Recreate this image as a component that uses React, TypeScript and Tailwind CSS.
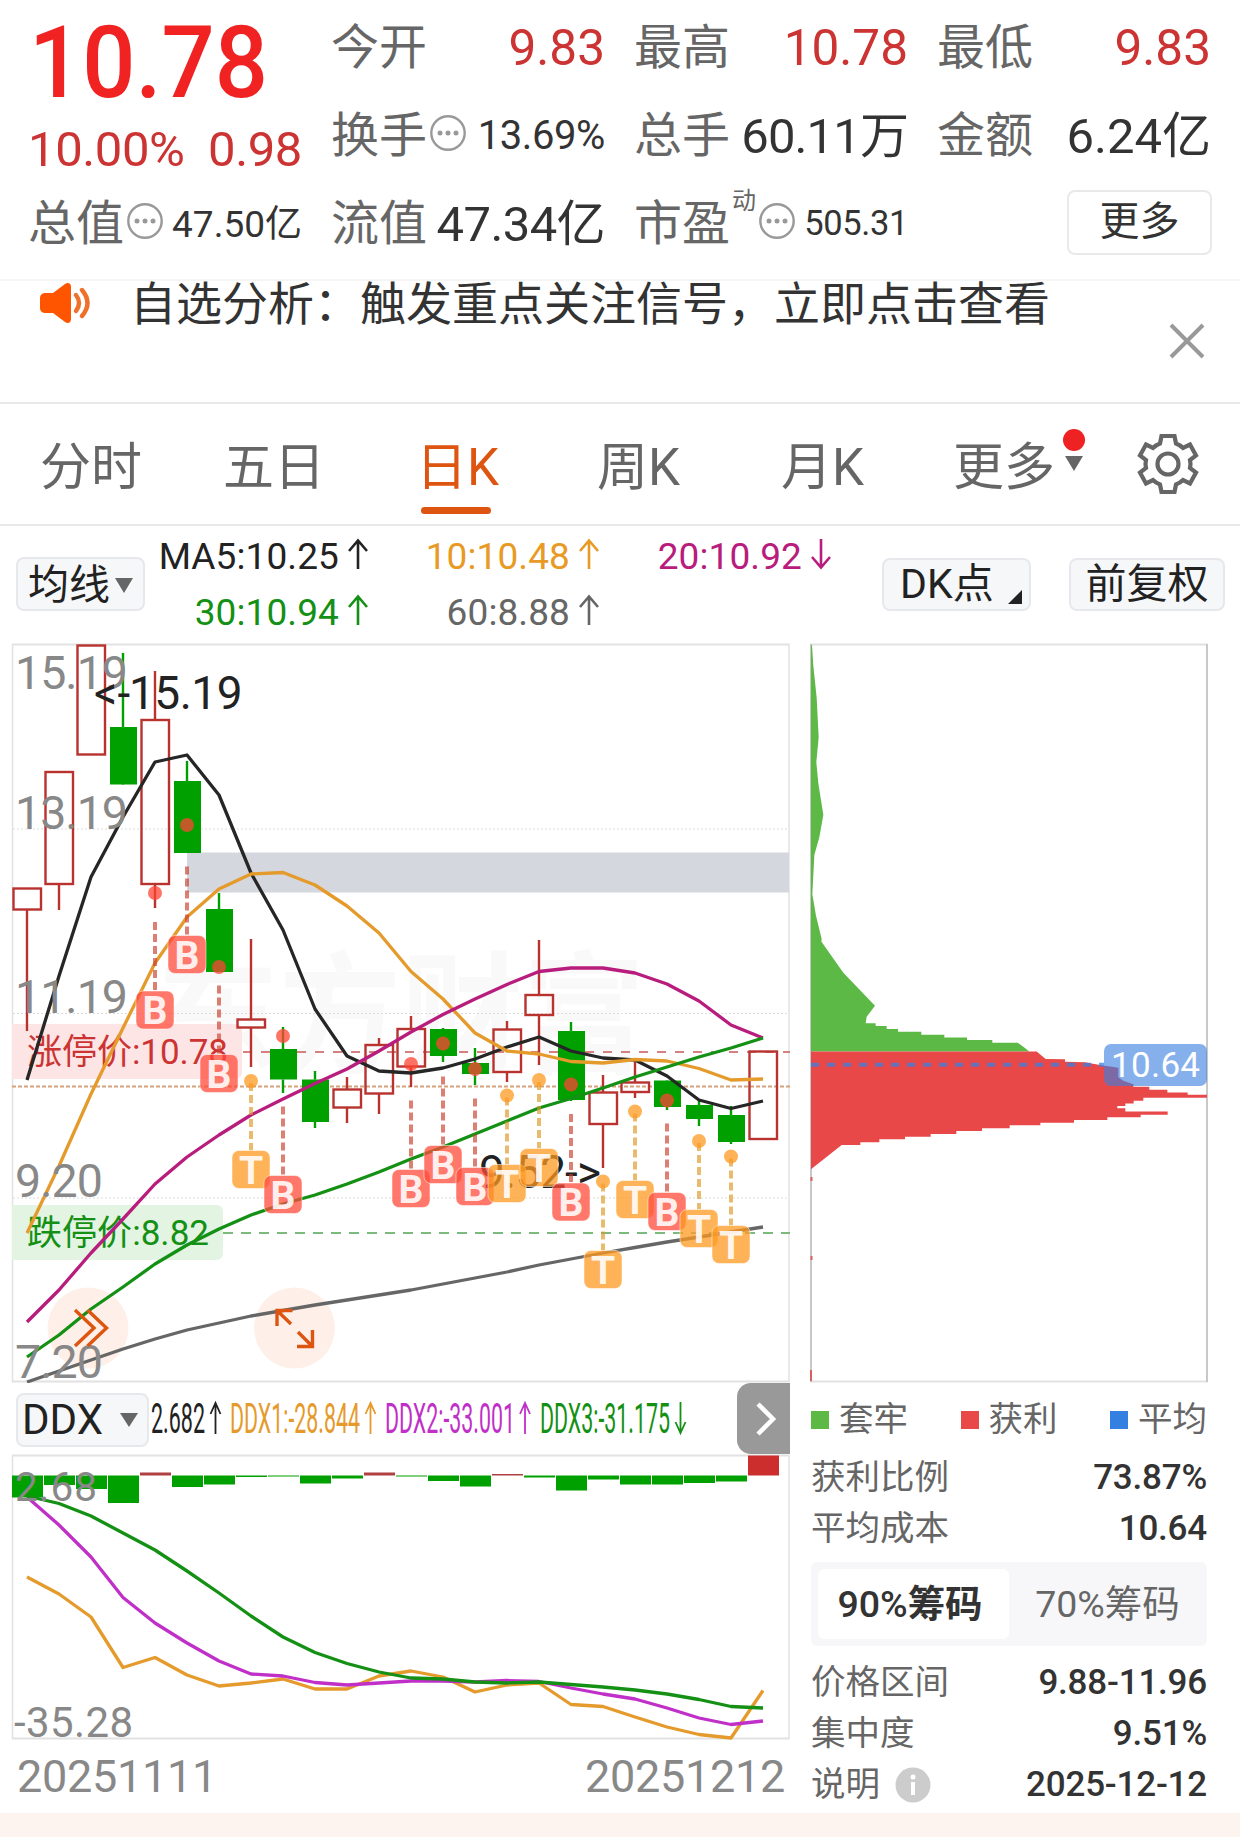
import type { ReactNode } from 'react'

const RED = '#b8332f'
const GREEN = '#00a000'

// x centre of the n-th trading day
const cx = (i: number) => 27 + i * 32

// [up, body top, body bottom, wick top, wick bottom]
type Candle = [boolean, number, number, number, number]

const CANDLES: Candle[] = [
  [true, 888.5, 909.5, 888, 1031],
  [true, 772, 884, 772, 910],
  [true, 645.5, 754.5, 645, 755],
  [false, 727, 784.5, 653, 785],
  [true, 720, 884, 671, 908],
  [false, 781, 853, 761, 853],
  [false, 909, 972, 893, 972],
  [true, 1019.5, 1027.5, 939, 1067],
  [false, 1049, 1079.5, 1027, 1093],
  [false, 1079.5, 1122, 1071, 1128],
  [true, 1089.5, 1107.5, 1077, 1123],
  [true, 1045, 1093.5, 1038, 1114],
  [true, 1029, 1066.5, 1016, 1087],
  [false, 1029, 1056, 1028, 1062],
  [false, 1063, 1074, 1048, 1085],
  [true, 1029.5, 1072, 1021, 1082],
  [true, 995, 1015, 940, 1065],
  [false, 1031, 1100, 1022, 1101],
  [true, 1092.5, 1124, 1075, 1168],
  [true, 1082.5, 1092, 1060, 1098],
  [false, 1080.5, 1107, 1080, 1110],
  [false, 1105, 1119, 1101, 1126],
  [false, 1115, 1142, 1106, 1144],
  [true, 1051.5, 1139, 1051, 1139],
]

const MA5 = [1080, 976, 877, 817, 762, 755, 795, 873, 930, 1009, 1056, 1071, 1073, 1068, 1059, 1047, 1037, 1051, 1058, 1060, 1076, 1100, 1108.5, 1101]
const MA10 = [1233, 1166, 1094, 1028, 963, 917, 889, 874, 872.5, 885, 906, 933, 971.5, 999, 1033, 1051, 1054, 1061.5, 1063, 1059.5, 1061, 1068.5, 1080, 1079]
const MA20 = [1322, 1290, 1253, 1219, 1184, 1157, 1135, 1115, 1099, 1083.5, 1069, 1051, 1032, 1014.5, 999, 984.5, 971.5, 968, 968, 973, 984, 1001, 1025, 1038]
const MA30 = [1357, 1335, 1309, 1287, 1264, 1245, 1229, 1215, 1204, 1195, 1184, 1172, 1159, 1147, 1134, 1121, 1108, 1098.5, 1088, 1077, 1067, 1057, 1048, 1038]
const MA60 = [1382, 1371, 1360, 1349, 1339, 1330, 1323, 1316, 1310.5, 1305, 1300, 1295, 1290, 1284, 1278, 1272, 1265, 1259, 1253, 1247.5, 1242, 1237, 1232, 1227]

// [day index, kind, dot y, badge centre y]
type Signal = [number, 'B' | 'T', number, number]

const SIGNALS: Signal[] = [
  [5, 'B', 825, 954.5],
  [4, 'B', 893, 1010],
  [6, 'B', 967, 1073.5],
  [7, 'T', 1081, 1169.5],
  [8, 'B', 1036, 1194.5],
  [12, 'B', 1064, 1188.5],
  [13, 'B', 1043.5, 1164.5],
  [14, 'B', 1069, 1186.5],
  [15, 'T', 1095.5, 1183.5],
  [16, 'T', 1080, 1167.5],
  [17, 'B', 1084.5, 1202],
  [18, 'T', 1181.5, 1269.5],
  [19, 'T', 1111.5, 1199.5],
  [20, 'B', 1100.5, 1211.5],
  [21, 'T', 1141, 1228.5],
  [22, 'T', 1156.5, 1244.5],
]

const DDX_BARS = [22, 9.5, 13.5, 27.5, -3, 11.5, 9, 1.5, 1, 8, 3, -3, 1, 5.5, 11, -1.5, 2, 15, 4, 9, 9, 7.5, 6, -20]
const DDX1 = [1577, 1594, 1617, 1667.5, 1657.5, 1675, 1686, 1683, 1679, 1689, 1689, 1676, 1671, 1677, 1692, 1685, 1683, 1704.5, 1706.5, 1717, 1727, 1734.5, 1738, 1690.5]
const DDX2 = [1497, 1525, 1557, 1597.5, 1623, 1643, 1661, 1674, 1676, 1682.5, 1685, 1683, 1681, 1681, 1682, 1680.5, 1681.5, 1688, 1694, 1699, 1708, 1718, 1724.5, 1721]
const DDX3 = [1496, 1503.5, 1516, 1533, 1550, 1571, 1593, 1616, 1637, 1652.5, 1663.5, 1672, 1678, 1679, 1682, 1683, 1682, 1684.5, 1687, 1690, 1694, 1699.5, 1706.5, 1708]

const TRAPPED =
  '63,43 66,43 70,100 80,190 86,300 79,370 85,430 100,517 88,580 73,630 67,740 78,800 95,865 94,872 160,960 255,1052 230,1083 227,1101 257,1101 257,1109 290,1109 290,1117 324,1117 324,1125 394,1125 394,1133 463,1133 463,1141 531,1141 531,1148 607,1148 607,1156 683,1156 700,1167 718,1180 63,1180'
const PROFIT =
  '63,1180 740,1180 767,1201 825,1202 825,1209 885,1210 930,1218 985,1226 985,1252 1000,1262 1030,1272 1030,1279 1078,1279 1078,1287 1132,1287 1132,1295 1193,1295 1193,1301 1251,1301 1251,1310 1060,1310 1060,1318 1031,1318 1031,1326 1006,1326 1006,1333 982,1333 982,1339 1006,1339 1006,1348 1133,1348 1133,1357 1052,1357 1052,1364 952,1364 952,1372 852,1372 852,1380 751,1380 751,1387 659,1387 659,1395 576,1395 576,1403 499,1403 499,1411 422,1411 422,1419 345,1419 345,1426 268,1426 268,1434 211,1434 211,1442 155,1442 63,1510'

function Line({ ys, color }: { ys: number[]; color: string }) {
  return (
    <polyline
      points={ys.map((y, i) => `${cx(i)},${y}`).join(' ')}
      fill="none"
      stroke={color}
      strokeWidth={3.3}
      strokeLinejoin="round"
    />
  )
}

function Dots() {
  return (
    <svg className="-mt-[7px] ml-[2px] h-[38px] w-[38px] shrink-0" viewBox="0 0 38 38">
      <circle cx="19" cy="19" r="16.7" fill="none" stroke="#999" strokeWidth="2.4" />
      <circle cx="11" cy="19" r="2.5" fill="#999" />
      <circle cx="19" cy="19" r="2.5" fill="#999" />
      <circle cx="27" cy="19" r="2.5" fill="#999" />
    </svg>
  )
}

function Arrow({ down = false }: { down?: boolean }) {
  return (
    <svg className={down ? 'ml-[8px] h-[32px] w-[22px] rotate-180' : 'ml-[8px] h-[32px] w-[22px]'} viewBox="0 0 22 32">
      <path d="M11 31V2.5M2 13L11 2.5L20 13" fill="none" stroke="currentColor" strokeWidth="2.6" />
    </svg>
  )
}

function Stat({ label, children }: { label: ReactNode; children?: ReactNode }) {
  return (
    <div className="flex h-[88px] items-center justify-between whitespace-nowrap">
      <span className="flex items-center text-[48px] leading-none text-[#666]">{label}</span>
      {children}
    </div>
  )
}

function Header() {
  return (
    <header className="grid h-[281px] grid-cols-[274px_274px_274px_274px] grid-rows-[88px_88px_88px] gap-x-[29px] border-b-2 border-[#f5f5f5] pl-[28px] pt-[4px] text-[#333]">
      <div className="row-span-2 flex flex-col">
        <div className="h-[116px] origin-left scale-x-[0.937] pl-[1px] pt-[9px] text-[100px] font-medium leading-none text-[#f02222]">10.78</div>
        <div className="flex justify-between pt-[5px] text-[49px] leading-none tracking-[-0.4px] text-[#cc3333]">
          <span>10.00%</span>
          <span>0.98</span>
        </div>
      </div>
      <Stat label="今开"><span className="pt-[2px] text-[49.5px] leading-none text-[#cc3333]">9.83</span></Stat>
      <Stat label="最高"><span className="pt-[2px] text-[49.5px] leading-none text-[#cc3333]">10.78</span></Stat>
      <Stat label="最低"><span className="pt-[2px] text-[49.5px] leading-none text-[#cc3333]">9.83</span></Stat>
      <Stat label={<>换手<Dots /></>}><span className="text-[40px] leading-none tracking-[-0.4px]">13.69%</span></Stat>
      <Stat label="总手"><span className="text-[49px] leading-none tracking-[-0.9px]">60.11万</span></Stat>
      <Stat label="金额"><span className="text-[49px] leading-none">6.24亿</span></Stat>
      <Stat label={<>总值<Dots /></>}><span className="text-[37px] leading-none">47.50亿</span></Stat>
      <Stat label="流值"><span className="text-[49px] leading-none tracking-[-0.6px]">47.34亿</span></Stat>
      <Stat label={<>市盈<span className="-mt-[47px] ml-[2px] text-[24px] leading-none">动</span><Dots /></>}>
        <span className="pb-[2px] text-[34.5px] leading-none tracking-[-0.4px]">505.31</span>
      </Stat>
      <div className="flex h-[84px] items-center justify-end">
        <button className="-mr-[1px] h-[65px] w-[145px] rounded-[8px] border-2 border-[#e9e9e9] text-[40px] leading-none">更多</button>
      </div>
    </header>
  )
}

function Notice() {
  return (
    <div className="flex h-[123px] border-b-2 border-[#e9e9e9] pl-[38px] text-[#333]">
      <svg className="h-[44px] w-[56px]" viewBox="38 281 56 44">
        <path d="M46 293h7l12-9c3-2 6-1 6 3v32c0 4-3 5-6 3l-12-9h-7c-4 0-6-2-6-5v-10c0-3 2-5 6-5z" fill="#ff5500" />
        <path d="M76 295q6 8 0 16M82 290q11 13 0 26" fill="none" stroke="#f0702a" strokeWidth="4.4" strokeLinecap="round" />
      </svg>
      <p className="ml-[36px] w-[1038px] text-[46px] leading-[46px]">自选分析：触发重点关注信号，立即点击查看</p>
      <svg className="mt-[41px] h-[38px] w-[38px]" viewBox="0 0 38 38">
        <path d="M3 3L35 35M35 3L3 35" stroke="#999" strokeWidth="4" />
      </svg>
    </div>
  )
}

function Tabs() {
  return (
    <nav className="flex h-[122px] border-b-2 border-[#e9e9e9] pl-[40px] pt-[37px] text-[51px] leading-[54px] text-[#666]">
      <span className="w-[183px]">分时</span>
      <span className="w-[193px]">五日</span>
      <span className="w-[181px] text-[#dd5511]">
        日K
        <i className="ml-[5px] mt-[12px] block h-[7px] w-[70px] rounded-full bg-[#dd5511]" />
      </span>
      <span className="w-[184px]">周K</span>
      <span className="w-[172px]">月K</span>
      <span>更多</span>
      <svg className="-mt-[13px] ml-[7px] h-[50px] w-[30px]" viewBox="1062 428 30 50">
        <circle cx="1074" cy="440" r="11" fill="#ee2222" />
        <path d="M1065 456h18l-9 15z" fill="#666" />
      </svg>
      <svg className="-mt-[8px] ml-[45px] h-[62px] w-[62px]" viewBox="-31 -31 62 62" fill="none" stroke="#666" strokeWidth="4.2">
        <path d="M-6.500 -28H6.500L8 -20.500Q12 -19 15 -16L22 -19.500L28 -8.500L22 -4Q23 0 22 4L28 8.500L22 19.500L15 16Q12 19 8 20.500L6.500 28H-6.500L-8 20.500Q-12 19 -15 16L-22 19.500L-28 8.500L-22 4Q-23 0 -22 -4L-28 -8.500L-22 -19.500L-15 -16Q-12 -19 -8 -20.500Z" />
        <circle r="10.500" />
      </svg>
    </nav>
  )
}

function Toolbar() {
  return (
    <div className="flex h-[114px] whitespace-nowrap text-[#222]">
      <button className="ml-[16px] mt-[31px] flex h-[54px] w-[129px] items-center rounded-[8px] border-2 border-[#e6e8ec] bg-[#f6f7f9] pl-[10px] pt-[2px] text-[41px] leading-none">
        均线
        <svg className="ml-[5px] h-[15px] w-[18px]" viewBox="0 0 18 15"><path d="M0 0h18l-9 15z" fill="#666" /></svg>
      </button>
      <div className="mt-[12px] grid h-[112px] w-[224px] grid-rows-[56px_56px] justify-items-end text-[37px] leading-[38px] tracking-[0.1px]">
        <span className="flex">MA5:10.25<Arrow /></span>
        <span className="flex text-[#149014]">30:10.94<Arrow /></span>
      </div>
      <div className="mt-[12px] grid h-[112px] w-[231px] grid-rows-[56px_56px] justify-items-end text-[37px] leading-[38px] tracking-[0.1px]">
        <span className="flex text-[#e89a24]">10:10.48<Arrow /></span>
        <span className="flex text-[#666]">60:8.88<Arrow /></span>
      </div>
      <div className="mt-[12px] flex w-[232px] justify-end text-[37px] leading-[38px] tracking-[0.1px] text-[#b81c7c]">
        20:10.92<Arrow down />
      </div>
      <button className="ml-[50px] mt-[32px] flex h-[53px] w-[149px] items-center rounded-[8px] border-2 border-[#e6e8ec] bg-[#f6f7f9] pl-[16px] text-[41px] leading-none">
        DK点
        <svg className="ml-[14px] mt-[24px] h-[14px] w-[14px]" viewBox="0 0 14 14"><path d="M14 0v14H0z" fill="#222" /></svg>
      </button>
      <button className="ml-[38px] mt-[32px] h-[53px] w-[156px] rounded-[8px] border-2 border-[#e6e8ec] bg-[#f6f7f9] text-[41px] leading-none">前复权</button>
    </div>
  )
}

function Badge({ signal }: { signal: Signal }) {
  const [day, kind, dot, y] = signal
  const x = cx(day)
  const buy = kind === 'B'
  return (
    <g>
      <path
        d={`M${x} ${buy ? y - 88 : dot + 2}V${y - 19}`}
        stroke={buy ? '#c93c2c' : '#dc9624'}
        strokeOpacity={0.65}
        strokeWidth={4}
        strokeDasharray="8 4"
      />
      <circle cx={x} cy={dot} r={7} fill={buy ? '#ff4433' : '#ff9922'} fillOpacity={0.75} />
      <rect x={x - 19} y={y - 19} width={38} height={38} rx={7} fill={buy ? '#ff4b3a' : '#ff9922'} fillOpacity={0.75} stroke="#fff" strokeOpacity={0.5} />
      <text x={x} y={y + 14} textAnchor="middle" fontSize={39} fontWeight={700} fill="#fff" fillOpacity={0.9}>{kind}</text>
    </g>
  )
}

function KlineChart() {
  return (
    <svg className="block h-[743px] w-[800px]" viewBox="0 640 800 743">
      <text x={157} y={1063} fontSize={132} fontWeight={700} fill="#f9f9f9" textLength={488} lengthAdjust="spacingAndGlyphs">东方财富</text>
      <path d="M12 644.500H789.500M12 1381.500H789.500" stroke="#e2e2e2" strokeWidth={2} />
      <path d="M12.500 644V1382M789 644V1382" stroke="#e2e2e2" strokeWidth={1.500} />
      <path d="M13 829H789M13 1013.500H789M13 1198H789" stroke="#dcdcdc" strokeDasharray="2 2" />
      <rect x={187} y={852.500} width={602} height={40} fill="#d4d7dd" />
      <circle cx={88} cy={1328} r={40.500} fill="#fef0e8" />
      <circle cx={294.500} cy={1328} r={40.500} fill="#fef0e8" />
      <path d="M12 1024h223q7 0 7 7v41q0 7-7 7H12z" fill="#fde5e5" />
      <path d="M12 1205h204q7 0 7 7v41q0 7-7 7H12z" fill="#e3f4e3" />
      <path d="M243 1052H790" stroke="#d68080" strokeWidth={1.800} strokeDasharray="9 9" />
      <path d="M223 1233H790" stroke="#7dba7d" strokeWidth={1.800} strokeDasharray="10 8" />
      <path d="M12 1086.500H790" stroke="#d4a27c" strokeWidth={1.800} strokeDasharray="4 2" />
      {CANDLES.map(([up, top, bottom, high, low], i) => (
        <g key={i} stroke={up ? RED : GREEN} strokeWidth={2.400}>
          <path d={`M${cx(i)} ${high}V${top}M${cx(i)} ${bottom}V${low}`} />
          {up ? (
            <rect x={cx(i) - 13.500} y={top} width={27.500} height={bottom - top} fill="none" />
          ) : (
            <rect x={cx(i) - 13} y={top} width={27} height={bottom - top} fill={GREEN} stroke="none" />
          )}
        </g>
      ))}
      <g fontSize={35}>
        <text x={27} y={1063.500} fill="#cc3333" textLength={201}>涨停价:10.78</text>
        <text x={27} y={1245} fill="#149014" textLength={182}>跌停价:8.82</text>
      </g>
      <Line ys={MA60} color="#666" />
      <Line ys={MA5} color="#262626" />
      <Line ys={MA10} color="#e59a2c" />
      <Line ys={MA20} color="#b81c7c" />
      <Line ys={MA30} color="#149014" />
      <g fontSize={46.500} fill="#888">
        <text x={15} y={689} textLength={113}>15.19</text>
        <text x={15} y={828.500} textLength={113}>13.19</text>
        <text x={15} y={1013} textLength={113}>11.19</text>
        <text x={15} y={1197} textLength={88}>9.20</text>
        <text x={15} y={1378} textLength={88}>7.20</text>
      </g>
      <g fontSize={46} fill="#222">
        <text x={94} y={709}>&lt;-<tspan x={129} letterSpacing={-0.500}>15.19</tspan></text>
        <text x={479} y={1188} textLength={122}>9.52-&gt;</text>
      </g>
      {SIGNALS.map((s) => <Badge key={s[0]} signal={s} />)}
      <g fill="none" stroke="#dd5511" strokeWidth={3.400}>
        <path d="M75 1310L94 1328L75 1346M87.500 1310L106.500 1328L87.500 1346" />
        <path d="M277 1326V1310.500H292.500M277 1310.500L291 1324M297 1346.500H312.500V1330M312.500 1346.500L298 1332" />
      </g>
    </svg>
  )
}

function DdxBar() {
  return (
    <div className="flex h-[71px]">
      <button className="ml-[16px] mt-[10px] flex h-[54px] w-[133px] items-center rounded-[8px] border-2 border-[#e6e8ec] bg-[#f6f7f9] pl-[4px] text-[42px] leading-none text-[#222]">
        DDX
        <svg className="ml-[17px] h-[14px] w-[18px]" viewBox="0 0 18 14"><path d="M0 0h18l-9 14z" fill="#666" /></svg>
      </button>
      <svg className="h-[71px] w-[588px]" viewBox="149 1383 588 71" fontSize={42}>
        <g fill="#222" stroke="#222">
          <text x={151} y={1432.500} textLength={54} lengthAdjust="spacingAndGlyphs" stroke="none">2.682</text>
          <path d="M215.500 1434V1403M210.500 1414L215.500 1403L220.500 1414" fill="none" strokeWidth={1.800} />
        </g>
        <g fill="#e59a2c" stroke="#e59a2c">
          <text x={230} y={1432.500} textLength={130} lengthAdjust="spacingAndGlyphs" stroke="none">DDX1:-28.844</text>
          <path d="M370.500 1434V1403M365.500 1414L370.500 1403L375.500 1414" fill="none" strokeWidth={1.800} />
        </g>
        <g fill="#c030c8" stroke="#c030c8">
          <text x={385} y={1432.500} textLength={130} lengthAdjust="spacingAndGlyphs" stroke="none">DDX2:-33.001</text>
          <path d="M525 1434V1403M520 1414L525 1403L530 1414" fill="none" strokeWidth={1.800} />
        </g>
        <g fill="#149014" stroke="#149014">
          <text x={540} y={1432.500} textLength={130} lengthAdjust="spacingAndGlyphs" stroke="none">DDX3:-31.175</text>
          <path d="M680.500 1402V1433M675.500 1422L680.500 1433L685.500 1422" fill="none" strokeWidth={1.800} />
        </g>
      </svg>
      <button className="flex w-[53px] items-center justify-center rounded-l-[14px] bg-[#999] pl-[4px]">
        <svg className="h-[36px] w-[22px]" viewBox="0 0 22 36"><path d="M3 3L18 18L3 33" fill="none" stroke="#fff" strokeWidth="4.5" /></svg>
      </button>
    </div>
  )
}

function DdxChart() {
  return (
    <svg className="block h-[291px] w-[800px]" viewBox="0 1454 800 291">
      <path d="M12 1455.500H789.500M12 1738.500H789.500" stroke="#e2e2e2" strokeWidth={2} />
      <path d="M12.500 1455V1739M789 1455V1739" stroke="#e2e2e2" strokeWidth={1.500} />
      {DDX_BARS.map((v, i) => (
        <rect
          key={i}
          x={12 + i * 32}
          y={1475.500 + Math.min(v, 0)}
          width={31}
          height={Math.abs(v)}
          fill={v > 0 ? GREEN : i === 23 ? '#cc2e2e' : '#b04040'}
        />
      ))}
      <Line ys={DDX1} color="#e59a2c" />
      <Line ys={DDX2} color="#c030c8" />
      <Line ys={DDX3} color="#149014" />
      <g fill="#888">
        <text x={15} y={1501} fontSize={40.500} textLength={82}>2.68</text>
        <text x={14} y={1737} fontSize={42} textLength={119}>-35.28</text>
      </g>
    </svg>
  )
}

function ChipChart() {
  return (
    <svg className="block h-[744px] w-[440px]" viewBox="800 640 440 744">
      <path d="M810 644.500H1208M810 1381.500H1208" stroke="#e2e2e2" strokeWidth={2} />
      <path d="M811 644V1382M1207 644V1382" stroke="#c8c8c8" strokeWidth={2} />
      <g transform="translate(790 630) scale(0.33333 0.35714)">
        <polygon points={TRAPPED} fill="#5cb946" />
        <polygon points={PROFIT} fill="#e84848" />
      </g>
      <path d="M811.500 1177v4M811.500 1256v4M811 1370v11" stroke="#d86060" strokeWidth={2} />
      <path d="M811 1064.700H1104" stroke="#3a7fe0" strokeOpacity={0.75} strokeWidth={4} strokeDasharray="8 8" />
      <rect x={1104} y={1044} width={103} height={42} rx={7} fill="#3a80e0" fillOpacity={0.62} />
      <text x={1111} y={1076.500} fontSize={35} fill="#fff" textLength={89}>10.64</text>
    </svg>
  )
}

function Legend({ swatch, children }: { swatch: string; children: ReactNode }) {
  return (
    <span className="flex items-center gap-[10px]">
      <i className={`h-[18px] w-[18px] ${swatch}`} />
      {children}
    </span>
  )
}

function Row({ label, value }: { label: ReactNode; value: string }) {
  return (
    <div className="flex h-[51px] items-center justify-between leading-none">
      <span className="flex items-center text-[34.500px] text-[#666]">{label}</span>
      <span className="text-[35px] font-medium tracking-[-0.2px] text-[#333]">{value}</span>
    </div>
  )
}

function ChipPanel() {
  return (
    <div className="w-[440px]">
      <ChipChart />
      <div className="w-[407px] pl-[11px]">
        <div className="flex h-[68px] items-center justify-between pt-[3px] text-[34.500px] leading-none text-[#666]">
          <Legend swatch="bg-[#5cb946]">套牢</Legend>
          <Legend swatch="bg-[#e84848]">获利</Legend>
          <Legend swatch="bg-[#3480e0]">平均</Legend>
        </div>
        <Row label="获利比例" value="73.87%" />
        <Row label="平均成本" value="10.64" />
        <div className="mb-[11px] mt-[8px] flex h-[84px] rounded-[6px] bg-[#f7f7fa] p-[7px] text-[37.500px] leading-none">
          <button className="w-[191px] rounded-[6px] bg-white pr-[7px] pt-[2px] font-medium text-[#333]">90%<b>筹码</b></button>
          <button className="flex-1 pl-[6px] pt-[2px] text-[#666]">70%筹码</button>
        </div>
        <Row label="价格区间" value="9.88-11.96" />
        <Row label="集中度" value="9.51%" />
        <Row
          label={
            <>
              说明
              <svg className="ml-[15px] h-[36px] w-[36px]" viewBox="0 0 36 36">
                <circle cx="18" cy="18" r="17.500" fill="#ccc" />
                <circle cx="18" cy="10" r="2.500" fill="#fff" />
                <path d="M18 15v13" stroke="#fff" strokeWidth="4" />
              </svg>
            </>
          }
          value="2025-12-12"
        />
      </div>
    </div>
  )
}

export default function App() {
  return (
    <div className="h-[1837px] w-[1240px] overflow-hidden bg-white font-[Roboto,'Noto_Sans_CJK_SC',sans-serif]">
      <Header />
      <Notice />
      <Tabs />
      <Toolbar />
      <main className="flex h-[1173px]">
        <div className="w-[800px]">
          <KlineChart />
          <DdxBar />
          <DdxChart />
          <div className="flex w-[785px] justify-between pl-[17px] pt-[6px] text-[45px] leading-[52px] tracking-[-0.3px] text-[#888]">
            <span>20251111</span>
            <span>20251212</span>
          </div>
        </div>
        <ChipPanel />
      </main>
      <footer className="h-[24px] bg-[#fdf3ef]" />
    </div>
  )
}
